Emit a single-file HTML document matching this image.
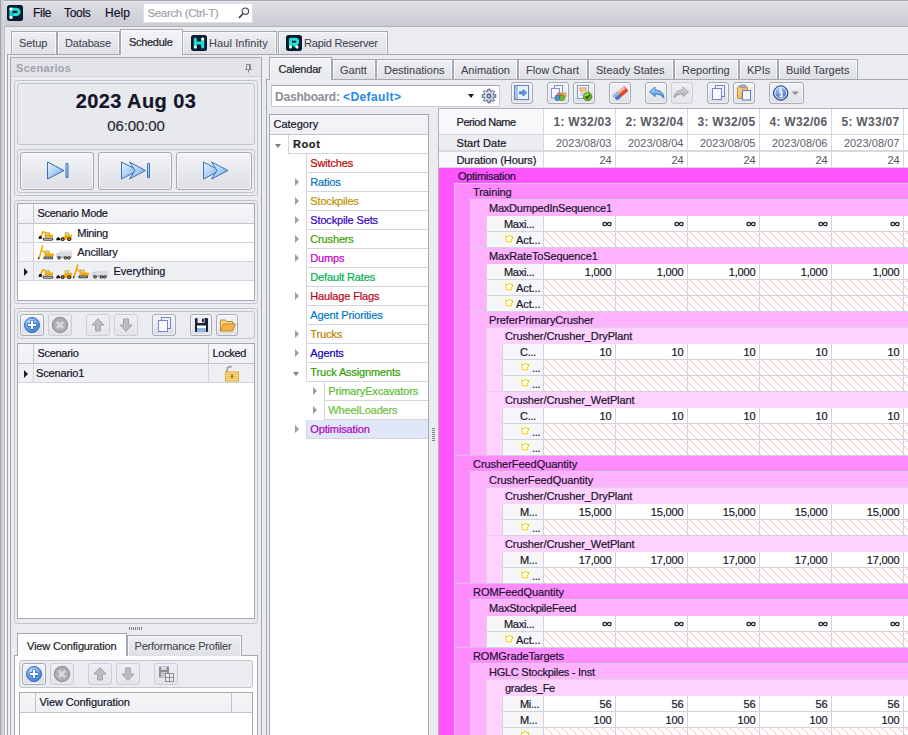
<!DOCTYPE html>
<html><head><meta charset="utf-8"><title>UI</title>
<style>
*{box-sizing:border-box;margin:0;padding:0}
html,body{width:908px;height:735px;overflow:hidden;background:#e9eaee}
body{font-family:"Liberation Sans",sans-serif;font-size:11px;color:#14142a;-webkit-text-stroke:.2px currentColor;position:relative;letter-spacing:-0.3px}
.a{position:absolute}
.t{position:absolute;white-space:nowrap;line-height:13px;height:13px}
.tab{-webkit-text-stroke:.08px currentColor;letter-spacing:0;box-shadow:inset 1px 1px 0 rgba(255,255,255,.65),inset -1px 0 0 rgba(255,255,255,.65);position:absolute;border:1px solid #a5a7b1;border-bottom:none;background:linear-gradient(#eeeff2,#dfe0e5);color:#44444f;white-space:nowrap}
.tab.act{-webkit-text-stroke:.2px currentColor;background:linear-gradient(#f3f3f6,#ebecf0 70%);color:#1e1e28;z-index:3}
.grp{position:absolute;border:1px solid #c3c5ce;border-radius:3px}
.btn{position:absolute;border:1px solid #a7a9b3;border-radius:3px;background:linear-gradient(#f3f4f6,#dedfe5);box-shadow:inset 0 0 0 1px rgba(255,255,255,.55)}
.btn.dis{border-color:#cdced6;background:linear-gradient(#eeeff2,#e4e5ea);box-shadow:none}
.btn svg{position:absolute;left:0;top:0}
.grid{position:absolute;background:#fff;border:1px solid #a5a7b1;overflow:hidden}
.gh{position:absolute;background:linear-gradient(#f6f6f8,#eff0f3);border-bottom:1px solid #c3c5ce;border-right:1px solid #c3c5ce}
.gr{position:absolute;border-bottom:1px solid #d3d4dc;border-right:1px solid #d3d4dc}
.tr{position:absolute;height:19px;border-bottom:1px solid #d3d4dc;border-left:1px solid #d3d4dc;background:#fff}
.tr .t{left:3.300px;top:3px;letter-spacing:-.15px}
.ar{position:absolute;width:0;height:0;border-left:4px solid #9a9ca6;border-top:4px solid transparent;border-bottom:4px solid transparent}
.ad{position:absolute;width:0;height:0;border-top:4px solid #7c7e88;border-left:3.600px solid transparent;border-right:3.600px solid transparent}
.c{position:absolute;height:16px;border-right:1px solid #d2d3db;border-bottom:1px solid #d2d3db;line-height:16px;text-align:right;padding-right:3.500px;letter-spacing:-.15px;background:#fff;white-space:nowrap;overflow:hidden}
.hc{background:transparent}
</style></head><body>
<div class="a" style="left:0px;top:0px;width:908px;height:27px;background:linear-gradient(#dfe0e5,#c9cad2);border-top:1px solid #a2a4ae;box-shadow:inset 0 1px 0 #ececf0"></div>
<div class="a" style="left:0px;top:0px;width:1px;height:735px;background:#a2a4ae"></div>
<div class="a" style="left:1px;top:0px;width:3px;height:735px;background:linear-gradient(90deg,#c3c5cd,#dcdde2)"></div>
<div class="a" style="left:4px;top:26px;width:904px;height:709px;background:#ebecf0;border-left:1px solid #b6b8c1;border-top:1px solid #b0b2bc"></div>
<div class="a" style="left:5px;top:27px;width:1px;height:708px;background:#f6f6f8"></div>
<div class="a" style="left:7px;top:54px;width:1px;height:681px;background:#a5a7b1"></div>
<div class="a" style="left:8px;top:55px;width:2px;height:680px;background:#f0f0f3"></div>
<svg class="a" style="left:7px;top:5px" width="16" height="16" viewBox="0 0 16 16"><rect width="16" height="16" rx="2.5" fill="#0a1a30"/><path d="M4 4 V12.3" stroke="#19d3d9" stroke-width="3.2" stroke-linecap="round" fill="none"/><path d="M4 4.200 H9.400 A2.700 2.700 0 0 1 9.400 9.600 H7" stroke="#22e0c8" stroke-width="3" stroke-linecap="round" stroke-linejoin="round" fill="none"/><circle cx="4" cy="4" r="1.6" fill="#fff"/><circle cx="4" cy="12.3" r="1.6" fill="#fff"/></svg>
<div class="t" style="left:33px;top:6px;font-size:12px;line-height:15px;height:15px">File</div>
<div class="t" style="left:64px;top:6px;font-size:12px;line-height:15px;height:15px">Tools</div>
<div class="t" style="left:105px;top:6px;font-size:12px;line-height:15px;height:15px;letter-spacing:.05px">Help</div>
<div class="a" style="left:143px;top:3px;width:110px;height:20px;background:#fff;border:1px solid #dfe0e6"></div>
<div class="t" style="left:147.5px;top:6px;font-size:11.500px;line-height:15px;height:15px;color:#a0a2ac;letter-spacing:-.35px">Search (Ctrl-T)</div>
<svg class="a" style="left:237px;top:6px" width="14" height="14" viewBox="0 0 14 14"><circle cx="8.3" cy="5.2" r="3.2" fill="none" stroke="#3a3a44" stroke-width="1.100"/><path d="M6 7.7 L2.5 11.4" stroke="#3a3a44" stroke-width="1.600" stroke-linecap="round"/></svg>
<div class="a" style="left:7px;top:54px;width:901px;height:1px;background:#a5a7b1"></div>
<div class="tab" style="left:11px;top:31px;width:46px;height:23px;"><div class="t" style="left:7px;top:5px;letter-spacing:-0.1px">Setup</div></div>
<div class="tab" style="left:57px;top:31px;width:63px;height:23px;"><div class="t" style="left:7px;top:5px;letter-spacing:-0.15px">Database</div></div>
<div class="tab act" style="left:120px;top:29px;width:63px;height:26px;"><div class="t" style="left:8px;top:6px;letter-spacing:-0.3px">Schedule</div></div>
<div class="tab" style="left:182px;top:31px;width:95px;height:23px;"><svg class="a" style="left:8px;top:3px" width="16" height="16" viewBox="0 0 16 16"><rect width="16" height="16" rx="2.5" fill="#0a1a30"/><path d="M4.3 4 V12 M11.7 4 V12 M4.3 8 H11.7" stroke="#22dfd0" stroke-width="3.100" stroke-linecap="round" fill="none"/><circle cx="4.3" cy="12" r="1.500" fill="#fff"/><circle cx="11.7" cy="4" r="1.500" fill="#fff"/></svg><div class="t" style="left:26px;top:5px;letter-spacing:0.1px">Haul Infinity</div></div>
<div class="tab" style="left:278px;top:31px;width:110px;height:23px;"><svg class="a" style="left:7px;top:3px" width="16" height="16" viewBox="0 0 16 16"><rect width="16" height="16" rx="2.5" fill="#0a1a30"/><path d="M4.5 12 V4.200 H9.300 A2.400 2.400 0 0 1 9.300 9 H7 L11 12" stroke="#22dfd0" stroke-width="3" stroke-linecap="round" stroke-linejoin="round" fill="none"/><circle cx="4.5" cy="12" r="1.4" fill="#fff"/><circle cx="11" cy="12" r="1.4" fill="#fff"/></svg><div class="t" style="left:25px;top:5px;letter-spacing:-0.2px">Rapid Reserver</div></div>
<div class="a" style="left:10px;top:57px;width:252px;height:678px;border:1px solid #a5a7b1;border-bottom:none;background:#ebecf0"></div>
<div class="a" style="left:11px;top:58px;width:250px;height:19px;background:#e3e4e9;border-bottom:1px solid #d0d1d9"></div>
<div class="t" style="left:16px;top:62px;font-weight:bold;color:#a0a2ac;font-size:11px;letter-spacing:.3px;-webkit-text-stroke:0">Scenarios</div>
<svg class="a" style="left:244px;top:63px" width="9" height="10" viewBox="0 0 9 10"><path d="M2.500 6 V1.500 H6.500 V6 M5.500 1.500 V6" fill="none" stroke="#868892" stroke-width="1"/><path d="M1 6.500 H8 M4.500 7 V9.500" stroke="#868892" stroke-width="1"/></svg>
<div class="grp" style="left:14px;top:80px;width:244px;height:116px;"></div>
<div class="grp" style="left:17px;top:83px;width:238px;height:62px;background:#e8e9ed;border-color:#c3c5ce"></div>
<div class="t" style="left:17px;top:89px;width:238px;text-align:center;font-weight:bold;font-size:20px;line-height:24px;height:24px;letter-spacing:.4px">2023 Aug 03</div>
<div class="t" style="left:17px;top:117px;width:238px;text-align:center;font-size:15px;line-height:18px;height:18px;letter-spacing:-.1px;color:#2a2a34">06:00:00</div>
<div class="grp" style="left:17px;top:149px;width:238px;height:44px;"></div>
<div class="btn" style="left:20px;top:152px;width:74px;height:38px;"><svg width="74" height="37" viewBox="0 0 74 37"><defs><linearGradient id="pga" x1="0" y1="0" x2="1" y2="1"><stop offset="0" stop-color="#eaf4fd"/><stop offset=".55" stop-color="#a9cdf2"/><stop offset="1" stop-color="#5a98e2"/></linearGradient></defs><path d="M26.5 9 L43 17.5 L26.5 26 Z" fill="url(#pga)" stroke="#3a70c0" stroke-width="1" stroke-linejoin="round"/><rect x="45" y="10.500" width="2" height="14" fill="url(#pga)" stroke="#3a70c0" stroke-width="1" stroke-linejoin="round"/></svg></div>
<div class="btn" style="left:98px;top:152px;width:74px;height:38px;"><svg width="74" height="37" viewBox="0 0 74 37"><defs><linearGradient id="pgb" x1="0" y1="0" x2="1" y2="1"><stop offset="0" stop-color="#eaf4fd"/><stop offset=".55" stop-color="#a9cdf2"/><stop offset="1" stop-color="#5a98e2"/></linearGradient></defs><path d="M22.500 9 L39 17.5 L22.5 26 Z" fill="url(#pgb)" stroke="#3a70c0" stroke-width="1" stroke-linejoin="round"/><path d="M30.5 9 L46.5 17.5 L30.5 26 L36 17.5 Z" fill="url(#pgb)" stroke="#3a70c0" stroke-width="1" stroke-linejoin="round"/><rect x="48.500" y="10.500" width="2" height="14" fill="url(#pgb)" stroke="#3a70c0" stroke-width="1" stroke-linejoin="round"/></svg></div>
<div class="btn" style="left:176px;top:152px;width:76px;height:38px;"><svg width="74" height="37" viewBox="0 0 74 37"><defs><linearGradient id="pgc" x1="0" y1="0" x2="1" y2="1"><stop offset="0" stop-color="#eaf4fd"/><stop offset=".55" stop-color="#a9cdf2"/><stop offset="1" stop-color="#5a98e2"/></linearGradient></defs><path d="M26.500 9 L43 17.5 L26.5 26 Z" fill="url(#pgc)" stroke="#3a70c0" stroke-width="1" stroke-linejoin="round"/><path d="M34.5 9 L51 17.5 L34.5 26 L40 17.5 Z" fill="url(#pgc)" stroke="#3a70c0" stroke-width="1" stroke-linejoin="round"/></svg></div>
<div class="grp" style="left:14px;top:200px;width:244px;height:104px;"></div>
<div class="grid" style="left:17px;top:203px;width:238px;height:98px;"></div>
<div class="gh" style="left:18px;top:204px;width:16px;height:20px;"></div>
<div class="gh" style="left:34px;top:204px;width:220px;height:20px;border-right:none"></div>
<div class="t" style="left:37.5px;top:207px;">Scenario Mode</div>
<div class="gr" style="left:18px;top:224px;width:16px;height:19px;background:#f3f3f6"></div>
<div class="gr" style="left:34px;top:224px;width:220px;height:19px;background:#fff;border-right:none"></div>
<div class="t" style="left:77.3px;top:227px;letter-spacing:-0.3px">Mining</div>
<div class="gr" style="left:18px;top:243px;width:16px;height:19px;background:#f3f3f6"></div>
<div class="gr" style="left:34px;top:243px;width:220px;height:19px;background:#fff;border-right:none"></div>
<div class="t" style="left:77.3px;top:246px;letter-spacing:-0.15px">Ancillary</div>
<div class="gr" style="left:18px;top:262px;width:16px;height:19px;background:#eeeff3"></div>
<div class="gr" style="left:34px;top:262px;width:220px;height:19px;background:#eeeff3;border-right:none"></div>
<div class="t" style="left:113.5px;top:265px;letter-spacing:0px">Everything</div>
<div class="a" style="left:24px;top:268px;width:0;height:0;border-left:4px solid #1e1e28;border-top:4px solid transparent;border-bottom:4px solid transparent"></div>
<svg class="a" style="left:38px;top:229px" width="18" height="16" viewBox="0 0 18 16"><g><path d="M2.600 7.500 L5 2.800 L8.600 4.200" fill="none" stroke="#f5a400" stroke-width="1.500" stroke-linejoin="round"/><path d="M.7 8.600 Q1 6.400 3.200 7 L4.500 9 Q3 10.400 .7 10 Z" fill="#111"/><path d="M7 3.200 H12 V5.400 H15 V8.600 H6.600 Z" fill="#f8a800"/><rect x="8.300" y="3.700" width="2.300" height="2" fill="#8fe4e0"/><rect x="4.800" y="8.800" width="10.400" height="2.900" rx="1.450" fill="#4a4a4a"/><rect x="6" y="9.700" width="8" height="1.100" fill="#c8c8c8"/></g></svg>
<svg class="a" style="left:56px;top:230px" width="18" height="16" viewBox="0 0 18 16"><g><path d="M0 10.300 Q.2 7.500 2.600 7 L4.200 9 L4 10.300 Z" fill="#111"/><path d="M4 8.600 L8.600 6 L8.800 2.200 L13 2.200 L13.600 5.600 L15.800 4.500 L15.900 9.600 L4 9.800 Z" fill="#f8a800"/><rect x="9.500" y="2.900" width="2.600" height="2.400" fill="#8fe4e0"/><circle cx="6.600" cy="9.200" r="1.900" fill="#222"/><circle cx="13.200" cy="9.200" r="1.900" fill="#222"/><circle cx="6.600" cy="9.200" r=".8" fill="#c8c8c8"/><circle cx="13.200" cy="9.200" r=".8" fill="#c8c8c8"/></g></svg>
<svg class="a" style="left:37px;top:245px" width="18" height="16" viewBox="0 0 18 16"><g><path d="M5.800 0.200 L1.900 14" stroke="#f5a400" stroke-width="1.500"/><path d="M1.700 12 L1.500 14.400" stroke="#444" stroke-width="1.200"/><path d="M4.600 5 L8.500 8" stroke="#f5a400" stroke-width="1.300"/><path d="M7.800 5.600 H12.500 L13 8.400 H16.800 V11.600 H7.400 Z" fill="#f8a800"/><rect x="9" y="6.300" width="2.600" height="2.200" fill="#8fe4e0"/><rect x="6.300" y="11.500" width="9.900" height="2.800" rx="1.400" fill="#3a3a3a"/><rect x="7.500" y="12.400" width="7.500" height="1" fill="#b0b0b0"/></g></svg>
<svg class="a" style="left:56px;top:248px" width="18" height="16" viewBox="0 0 18 16"><g><path d="M3.600 1.300 L15.900 1.100 L15.900 8.600 L3.600 8.600 Z" fill="#dcdce0"/><path d="M3.600 1.300 L15.900 1.100 L15.900 3 L3.600 3.400 Z" fill="#f6f6f8"/><path d="M0.300 5.200 L3.600 4.200 L3.600 9 L0.300 9 Z" fill="#c4d4d8"/><rect x=".5" y="8.600" width="15.400" height="1" fill="#888"/><circle cx="3.100" cy="9.900" r="1.700" fill="#222"/><circle cx="9.300" cy="9.900" r="1.700" fill="#222"/><circle cx="12.800" cy="9.900" r="1.700" fill="#222"/><circle cx="3.100" cy="9.900" r=".7" fill="#ddd"/><circle cx="9.300" cy="9.900" r=".7" fill="#ddd"/><circle cx="12.800" cy="9.900" r=".7" fill="#ddd"/></g></svg>
<svg class="a" style="left:38px;top:267px" width="18" height="16" viewBox="0 0 18 16"><g><path d="M2.600 7.500 L5 2.800 L8.600 4.200" fill="none" stroke="#f5a400" stroke-width="1.500" stroke-linejoin="round"/><path d="M.7 8.600 Q1 6.400 3.200 7 L4.500 9 Q3 10.400 .7 10 Z" fill="#111"/><path d="M7 3.200 H12 V5.400 H15 V8.600 H6.600 Z" fill="#f8a800"/><rect x="8.300" y="3.700" width="2.300" height="2" fill="#8fe4e0"/><rect x="4.800" y="8.800" width="10.400" height="2.900" rx="1.450" fill="#4a4a4a"/><rect x="6" y="9.700" width="8" height="1.100" fill="#c8c8c8"/></g></svg>
<svg class="a" style="left:56px;top:268px" width="18" height="16" viewBox="0 0 18 16"><g><path d="M0 10.300 Q.2 7.500 2.600 7 L4.200 9 L4 10.300 Z" fill="#111"/><path d="M4 8.600 L8.600 6 L8.800 2.200 L13 2.200 L13.600 5.600 L15.800 4.500 L15.900 9.600 L4 9.800 Z" fill="#f8a800"/><rect x="9.500" y="2.900" width="2.600" height="2.400" fill="#8fe4e0"/><circle cx="6.600" cy="9.200" r="1.900" fill="#222"/><circle cx="13.200" cy="9.200" r="1.900" fill="#222"/><circle cx="6.600" cy="9.200" r=".8" fill="#c8c8c8"/><circle cx="13.200" cy="9.200" r=".8" fill="#c8c8c8"/></g></svg>
<svg class="a" style="left:72px;top:264px" width="18" height="16" viewBox="0 0 18 16"><g><path d="M5.800 0.200 L1.900 14" stroke="#f5a400" stroke-width="1.500"/><path d="M1.700 12 L1.500 14.400" stroke="#444" stroke-width="1.200"/><path d="M4.600 5 L8.500 8" stroke="#f5a400" stroke-width="1.300"/><path d="M7.800 5.600 H12.500 L13 8.400 H16.800 V11.600 H7.400 Z" fill="#f8a800"/><rect x="9" y="6.300" width="2.600" height="2.200" fill="#8fe4e0"/><rect x="6.300" y="11.500" width="9.900" height="2.800" rx="1.400" fill="#3a3a3a"/><rect x="7.500" y="12.400" width="7.500" height="1" fill="#b0b0b0"/></g></svg>
<svg class="a" style="left:92px;top:267px" width="18" height="16" viewBox="0 0 18 16"><g><path d="M3.600 1.300 L15.900 1.100 L15.900 8.600 L3.600 8.600 Z" fill="#dcdce0"/><path d="M3.600 1.300 L15.900 1.100 L15.900 3 L3.600 3.400 Z" fill="#f6f6f8"/><path d="M0.300 5.200 L3.600 4.200 L3.600 9 L0.300 9 Z" fill="#c4d4d8"/><rect x=".5" y="8.600" width="15.400" height="1" fill="#888"/><circle cx="3.100" cy="9.900" r="1.700" fill="#222"/><circle cx="9.300" cy="9.900" r="1.700" fill="#222"/><circle cx="12.800" cy="9.900" r="1.700" fill="#222"/><circle cx="3.100" cy="9.900" r=".7" fill="#ddd"/><circle cx="9.300" cy="9.900" r=".7" fill="#ddd"/><circle cx="12.800" cy="9.900" r=".7" fill="#ddd"/></g></svg>
<div class="grp" style="left:14px;top:308px;width:244px;height:316px;"></div>
<div class="grp" style="left:17px;top:311px;width:238px;height:28px;"></div>
<div class="btn" style="left:20px;top:314px;width:24px;height:22px;"><svg width="22" height="20" viewBox="0 0 22 20"><defs><radialGradient id="bp" cx=".4" cy=".3" r=".8"><stop offset="0" stop-color="#c4e2fc"/><stop offset=".6" stop-color="#5a9ae8"/><stop offset="1" stop-color="#3274d4"/></radialGradient></defs><circle cx="11" cy="10" r="7.500" fill="url(#bp)" stroke="#3a6cc0" stroke-width="1"/><path d="M11 5.500 V14.500 M6.500 10 H15.500" stroke="#2f62b8" stroke-width="3.600"/><path d="M11 6 V14 M7 10 H15" stroke="#fff" stroke-width="2.200"/></svg></div>
<div class="btn dis" style="left:48px;top:314px;width:24px;height:22px;"><svg width="22" height="20" viewBox="0 0 22 20"><circle cx="11" cy="10" r="7.500" fill="#b0b0b2" stroke="#98989c" stroke-width="1.400"/><path d="M7.800 6.800 L14.200 13.200 M14.200 6.800 L7.800 13.200" stroke="#dadadc" stroke-width="2.600"/></svg></div>
<div class="btn dis" style="left:86px;top:314px;width:24px;height:22px;"><svg width="22" height="20" viewBox="0 0 22 20"><path d="M11 3.500 L17 10 H13.500 V16 H8.500 V10 H5 Z" fill="#bcbcbe" stroke="#a2a2a6" stroke-width="1" stroke-linejoin="round"/></svg></div>
<div class="btn dis" style="left:114px;top:314px;width:24px;height:22px;"><svg width="22" height="20" viewBox="0 0 22 20"><path d="M11 16.500 L17 10 H13.500 V4 H8.500 V10 H5 Z" fill="#bcbcbe" stroke="#a2a2a6" stroke-width="1" stroke-linejoin="round"/></svg></div>
<div class="btn" style="left:152px;top:314px;width:24px;height:22px;"><svg width="22" height="20" viewBox="0 0 22 20"><rect x="8.500" y="2.500" width="9" height="11" fill="#eef1fa" stroke="#7486c6"/><rect x="5.500" y="5.500" width="9" height="11" fill="#f6f8fd" stroke="#7486c6"/></svg></div>
<div class="btn" style="left:190px;top:314px;width:22px;height:22px;"><svg width="21" height="20" viewBox="0 0 21 20"><rect x="4" y="3" width="13" height="14" rx="1" fill="#1a2238"/><rect x="6.500" y="3" width="7" height="5" fill="#e8ecf4"/><rect x="11" y="3.800" width="1.800" height="3.400" fill="#1a2238"/><rect x="6" y="10.500" width="9" height="6.500" fill="#fff"/><rect x="6" y="13" width="9" height="4" fill="#8ab6e8"/></svg></div>
<div class="btn" style="left:216px;top:314px;width:22px;height:22px;"><svg width="21" height="20" viewBox="0 0 21 20"><path d="M3.500 16 V5 H8 L9.500 6.500 H15.500 V9" fill="#f6d48a" stroke="#c08a28" stroke-linejoin="round"/><path d="M3.500 16 L6.500 9 H18.500 L15.500 16 Z" fill="#f2b449" stroke="#c08a28" stroke-linejoin="round"/></svg></div>
<div class="grid" style="left:17px;top:343px;width:238px;height:276px;"></div>
<div class="gh" style="left:18px;top:344px;width:16px;height:20px;"></div>
<div class="gh" style="left:34px;top:344px;width:175px;height:20px;"></div>
<div class="gh" style="left:209px;top:344px;width:45px;height:20px;border-right:none"></div>
<div class="t" style="left:37.5px;top:347px;">Scenario</div>
<div class="t" style="left:212.5px;top:347px;">Locked</div>
<div class="gr" style="left:18px;top:364px;width:16px;height:19px;background:#eeeff3"></div>
<div class="gr" style="left:34px;top:364px;width:175px;height:19px;background:#eeeff3"></div>
<div class="gr" style="left:209px;top:364px;width:45px;height:19px;background:#eeeff3;border-right:none"></div>
<div class="a" style="left:24px;top:370px;width:0;height:0;border-left:4px solid #1e1e28;border-top:4px solid transparent;border-bottom:4px solid transparent"></div>
<div class="t" style="left:36px;top:367px;letter-spacing:-.15px">Scenario1</div>
<svg class="a" style="left:224px;top:365px" width="16" height="17" viewBox="0 0 16 17"><path d="M3.200 7.500 V4.500 A2.600 2.600 0 0 1 7.600 2.400" fill="none" stroke="#a4a4aa" stroke-width="2"/><rect x="1.500" y="7" width="13" height="9" fill="#f8dc8c" stroke="#e0a428"/><path d="M3 9.500 H13 M3 11.500 H13 M3 13.500 H13" stroke="#eab840" stroke-width="1"/><rect x="7" y="9.500" width="2" height="3.500" fill="#b07820"/></svg>
<div class="a" style="left:129px;top:627px;width:1px;height:3px;background:#80828e"></div>
<div class="a" style="left:131px;top:627px;width:1px;height:3px;background:#80828e"></div>
<div class="a" style="left:133px;top:627px;width:1px;height:3px;background:#80828e"></div>
<div class="a" style="left:135px;top:627px;width:1px;height:3px;background:#80828e"></div>
<div class="a" style="left:137px;top:627px;width:1px;height:3px;background:#80828e"></div>
<div class="a" style="left:139px;top:627px;width:1px;height:3px;background:#80828e"></div>
<div class="a" style="left:141px;top:627px;width:1px;height:3px;background:#80828e"></div>
<div class="a" style="left:14px;top:655px;width:244px;height:80px;border:1px solid #a5a7b1;border-bottom:none;background:#fdfdfe"></div>
<div class="tab act" style="left:17px;top:633px;width:110px;height:23px;background:#fdfdfe"><div class="t" style="left:9px;top:6px;letter-spacing:-0.15px">View Configuration</div></div>
<div class="tab" style="left:127px;top:635px;width:115px;height:21px;"><div class="t" style="left:6.5px;top:4px;letter-spacing:-0.2px">Performance Profiler</div></div>
<div class="grp" style="left:19px;top:660px;width:234px;height:28px;background:#ebecf0"></div>
<div class="btn" style="left:22px;top:663px;width:24px;height:22px;"><svg width="22" height="20" viewBox="0 0 22 20"><defs><radialGradient id="bp" cx=".4" cy=".3" r=".8"><stop offset="0" stop-color="#c4e2fc"/><stop offset=".6" stop-color="#5a9ae8"/><stop offset="1" stop-color="#3274d4"/></radialGradient></defs><circle cx="11" cy="10" r="7.500" fill="url(#bp)" stroke="#3a6cc0" stroke-width="1"/><path d="M11 5.500 V14.500 M6.500 10 H15.500" stroke="#2f62b8" stroke-width="3.600"/><path d="M11 6 V14 M7 10 H15" stroke="#fff" stroke-width="2.200"/></svg></div>
<div class="btn dis" style="left:50px;top:663px;width:24px;height:22px;"><svg width="22" height="20" viewBox="0 0 22 20"><circle cx="11" cy="10" r="7.500" fill="#b0b0b2" stroke="#98989c" stroke-width="1.400"/><path d="M7.800 6.800 L14.200 13.200 M14.200 6.800 L7.800 13.200" stroke="#dadadc" stroke-width="2.600"/></svg></div>
<div class="btn dis" style="left:88px;top:663px;width:24px;height:22px;"><svg width="22" height="20" viewBox="0 0 22 20"><path d="M11 3.500 L17 10 H13.500 V16 H8.500 V10 H5 Z" fill="#bcbcbe" stroke="#a2a2a6" stroke-width="1" stroke-linejoin="round"/></svg></div>
<div class="btn dis" style="left:116px;top:663px;width:24px;height:22px;"><svg width="22" height="20" viewBox="0 0 22 20"><path d="M11 16.500 L17 10 H13.500 V4 H8.500 V10 H5 Z" fill="#bcbcbe" stroke="#a2a2a6" stroke-width="1" stroke-linejoin="round"/></svg></div>
<div class="btn dis" style="left:154px;top:663px;width:24px;height:22px;"><svg width="22" height="20" viewBox="0 0 22 20"><rect x="4" y="2.500" width="10" height="11" fill="#8e8e94"/><rect x="6" y="2.500" width="5.500" height="3.500" fill="#d8d8dc"/><rect x="6" y="8" width="6" height="5.500" fill="#c4c4c8"/><rect x="10.500" y="9.500" width="8" height="8" fill="#ececef" stroke="#8e8e94"/><path d="M10.500 13.500 H18.500 M14.500 9.500 V17.500" stroke="#8e8e94"/></svg></div>
<div class="grid" style="left:19px;top:692px;width:234px;height:50px;"></div>
<div class="gh" style="left:20px;top:693px;width:16px;height:20px;"></div>
<div class="gh" style="left:36px;top:693px;width:196px;height:20px;"></div>
<div class="gh" style="left:232px;top:693px;width:20px;height:20px;border-right:none"></div>
<div class="t" style="left:39.5px;top:696px;letter-spacing:-.1px">View Configuration</div>
<div class="a" style="left:266px;top:79px;width:650px;height:660px;border:1px solid #a5a7b1;background:#ebecf0"></div>
<div class="tab act" style="left:269px;top:57px;width:63px;height:23px;"><div class="t" style="left:8.5px;top:5px;letter-spacing:-0.2px">Calendar</div></div>
<div class="tab" style="left:332px;top:59px;width:44px;height:20px;"><div class="t" style="left:7px;top:4px;letter-spacing:0px">Gantt</div></div>
<div class="tab" style="left:376px;top:59px;width:77px;height:20px;"><div class="t" style="left:7px;top:4px;letter-spacing:0px">Destinations</div></div>
<div class="tab" style="left:453px;top:59px;width:65px;height:20px;"><div class="t" style="left:7px;top:4px;letter-spacing:0px">Animation</div></div>
<div class="tab" style="left:518px;top:59px;width:70px;height:20px;"><div class="t" style="left:7px;top:4px;letter-spacing:0px">Flow Chart</div></div>
<div class="tab" style="left:588px;top:59px;width:86px;height:20px;"><div class="t" style="left:7px;top:4px;letter-spacing:0px">Steady States</div></div>
<div class="tab" style="left:674px;top:59px;width:65px;height:20px;"><div class="t" style="left:7px;top:4px;letter-spacing:0px">Reporting</div></div>
<div class="tab" style="left:739px;top:59px;width:39px;height:20px;"><div class="t" style="left:7px;top:4px;letter-spacing:0px">KPIs</div></div>
<div class="tab" style="left:778px;top:59px;width:80px;height:20px;"><div class="t" style="left:7px;top:4px;letter-spacing:0px">Build Targets</div></div>
<div class="a" style="left:271px;top:85px;width:229px;height:22px;background:#fff;border:1px solid #c8cad3;border-top-color:#a2a4b0"></div>
<div class="t" style="left:275px;top:90px;font-weight:bold;color:#8c8e98;font-size:12px;letter-spacing:-.2px;line-height:14px;height:14px;-webkit-text-stroke:0">Dashboard:</div>
<div class="t" style="left:343px;top:90px;font-weight:bold;color:#1e8ae6;font-size:12px;letter-spacing:.4px;line-height:14px;height:14px;-webkit-text-stroke:0">&lt;Default&gt;</div>
<div class="a" style="left:468px;top:94px;width:0;height:0;border-top:4px solid #1c1c30;border-left:3.500px solid transparent;border-right:3.500px solid transparent"></div>
<svg class="a" style="left:481px;top:88px" width="16" height="16" viewBox="0 0 16 16"><defs><linearGradient id="gg" x1="0" y1="0" x2="1" y2="1"><stop offset="0" stop-color="#f4f7fc"/><stop offset="1" stop-color="#b4bfd6"/></linearGradient></defs><path d="M6.81 1.20 L9.19 1.20 L9.14 3.24 L10.56 3.82 L11.97 2.35 L13.65 4.03 L12.18 5.44 L12.76 6.86 L14.80 6.81 L14.80 9.19 L12.76 9.14 L12.18 10.56 L13.65 11.97 L11.97 13.65 L10.56 12.18 L9.14 12.76 L9.19 14.80 L6.81 14.80 L6.86 12.76 L5.44 12.18 L4.03 13.65 L2.35 11.97 L3.82 10.56 L3.24 9.14 L1.20 9.19 L1.20 6.81 L3.24 6.86 L3.82 5.44 L2.35 4.03 L4.03 2.35 L5.44 3.82 L6.86 3.24 Z" fill="url(#gg)" stroke="#46557e" stroke-width="1" stroke-linejoin="round"/><circle cx="8" cy="8" r="1.900" fill="#c4c6cc" stroke="#46557e" stroke-width="1.100"/></svg>
<div class="btn" style="left:511px;top:82px;width:22px;height:22px;"><svg width="20" height="20" viewBox="0 0 20 20"><rect x="2.500" y="2.500" width="14" height="14" fill="#e9f0fb" stroke="#6286cc"/><rect x="3" y="3" width="3" height="13" fill="#a4c4ee"/><path d="M7.500 8.700 H11 V6.600 L14.800 9.800 L11 13 V10.900 H7.500 Z" fill="#5a9ae6" stroke="#2f66b8" stroke-width=".7" stroke-linejoin="round"/></svg></div>
<div class="btn" style="left:547px;top:82px;width:22px;height:22px;"><svg width="20" height="20" viewBox="0 0 20 20"><rect x="6.500" y="2.500" width="8" height="9.500" fill="#f4f6fc" stroke="#8094cc"/><rect x="3.500" y="5.500" width="8" height="9.500" fill="#f8f9fd" stroke="#8094cc"/><rect x="9.500" y="10" width="4.300" height="4.500" rx=".8" fill="#f0786a" stroke="#c84838" stroke-width=".7"/><rect x="13.600" y="10" width="4.300" height="4.500" rx=".8" fill="#f2b450" stroke="#c8841c" stroke-width=".7"/><rect x="7.300" y="12.300" width="4.400" height="5" rx=".8" fill="#4c8ee0" stroke="#2a5eac" stroke-width=".7"/><rect x="11.700" y="12.300" width="4.400" height="5" rx=".8" fill="#74bc30" stroke="#417c14" stroke-width=".7"/></svg></div>
<div class="btn" style="left:573px;top:82px;width:22px;height:22px;"><svg width="20" height="20" viewBox="0 0 20 20"><defs><radialGradient id="gc" cx=".4" cy=".3" r=".8"><stop offset="0" stop-color="#a4d84c"/><stop offset="1" stop-color="#4c9414"/></radialGradient></defs><rect x="3.500" y="2.500" width="11" height="13" fill="#f6f8fd" stroke="#8094cc"/><rect x="6" y="5" width="6" height="2.800" fill="#fde4c4" stroke="#e48a28" stroke-width="1"/><path d="M6 10 H10.500 M6 12 H9" stroke="#a4b2d8"/><circle cx="13.600" cy="13.500" r="4.300" fill="url(#gc)" stroke="#3c7c10" stroke-width=".7"/><path d="M11.500 13.400 L13.100 15 L15.800 11.800" fill="none" stroke="#143c04" stroke-width="1.200"/></svg></div>
<div class="btn" style="left:609px;top:82px;width:22px;height:22px;"><svg width="20" height="20" viewBox="0 0 20 20"><g transform="rotate(-40 10.500 10)"><path d="M3 7 H17 Q18 7 18 8 V12.500 Q18 13.500 17 13.500 H5 Q3 13.500 3 11.500 Z" fill="#d84a34"/><path d="M3 7 H8.500 V13.500 H5 Q3 13.500 3 11.500 Z" fill="#3e7ed0"/><path d="M3 7 H17.500 V10 H3 Z" fill="#f8a48e"/><path d="M3 7 H8.500 V10 H3 Z" fill="#86bcf2"/><path d="M9.500 7.800 H16.500" stroke="#fcd0c4" stroke-width="1"/></g></svg></div>
<div class="btn" style="left:645px;top:82px;width:22px;height:22px;"><svg width="20" height="20" viewBox="0 0 20 20"><defs><linearGradient id="gu0" x1="0" y1="0" x2="0" y2="1"><stop offset="0" stop-color="#b8e0fa"/><stop offset="1" stop-color="#3c88e0"/></linearGradient></defs><path d="M3.500 8.800 L9 4 V7 C14.500 7 17.800 10 17.800 15.200 C15.800 12 13 11 9 11 V13.600 Z" fill="url(#gu0)" stroke="#2c68b8" stroke-width=".8" stroke-linejoin="round"/></svg></div>
<div class="btn dis" style="left:671px;top:82px;width:22px;height:22px;"><svg width="20" height="20" viewBox="0 0 20 20"><defs><linearGradient id="gu1" x1="0" y1="0" x2="0" y2="1"><stop offset="0" stop-color="#dcdcdc"/><stop offset="1" stop-color="#a4a4a6"/></linearGradient></defs><path transform="translate(20 0) scale(-1 1)" d="M3.500 8.800 L9 4 V7 C14.500 7 17.800 10 17.800 15.200 C15.800 12 13 11 9 11 V13.600 Z" fill="url(#gu1)" stroke="#9c9ca0" stroke-width=".8" stroke-linejoin="round"/></svg></div>
<div class="btn" style="left:707px;top:82px;width:22px;height:22px;"><svg width="20" height="20" viewBox="0 0 20 20"><rect x="7.500" y="2.500" width="9" height="11" fill="#eef1fa" stroke="#7486c6"/><rect x="4.500" y="5.500" width="9" height="11" fill="#f6f8fd" stroke="#7486c6"/></svg></div>
<div class="btn" style="left:733px;top:82px;width:22px;height:22px;"><svg width="20" height="20" viewBox="0 0 20 20"><defs><linearGradient id="gp" x1="0" y1="0" x2="1" y2="1"><stop offset="0" stop-color="#fbe0a4"/><stop offset="1" stop-color="#e2a040"/></linearGradient></defs><rect x="3.500" y="3.500" width="10" height="12" rx="1" fill="url(#gp)" stroke="#c88c30"/><rect x="6" y="2" width="5.500" height="2.800" rx=".8" fill="#b4bcd4" stroke="#6a7498" stroke-width=".7"/><rect x="8.500" y="7.500" width="8" height="9.500" fill="#f4f6fc" stroke="#6478bc"/></svg></div>
<div class="btn" style="left:769px;top:82px;width:35px;height:22px;"><svg width="34" height="20" viewBox="0 0 34 20"><defs><radialGradient id="bi" cx=".4" cy=".25" r=".85"><stop offset="0" stop-color="#a4c8f4"/><stop offset="1" stop-color="#2458b8"/></radialGradient></defs><circle cx="10.700" cy="10" r="7.200" fill="url(#bi)" stroke="#1c3f8c" stroke-width="1"/><circle cx="10.700" cy="10" r="5.800" fill="none" stroke="#eef4fc" stroke-width="1"/><circle cx="10.700" cy="6.600" r="1.250" fill="#fff"/><path d="M9.300 9 H11.600 V13.300 M9.200 13.500 H13" stroke="#fff" stroke-width="1.600" fill="none"/><path d="M21.500 8.500 H29 L25.250 12.300 Z" fill="#92949e"/></svg></div>
<div class="grid" style="left:269px;top:114px;width:160px;height:630px;"></div>
<div class="gh" style="left:270px;top:115px;width:158px;height:20px;border-right:none"></div>
<div class="t" style="left:273.5px;top:118px;letter-spacing:0">Category</div>
<div class="tr" style="left:288px;top:135px;width:140px;"><div class="t" style="color:#1e1e28;font-weight:bold;letter-spacing:.6px;left:4px;">Root</div></div>
<div class="ad" style="left:274.5px;top:143.5px"></div>
<div class="tr" style="left:306px;top:154px;width:122px;"><div class="t" style="color:#c00000;">Switches</div></div>
<div class="tr" style="left:306px;top:173px;width:122px;"><div class="t" style="color:#0070c0;">Ratios</div></div>
<div class="ar" style="left:295px;top:178px"></div>
<div class="tr" style="left:306px;top:192px;width:122px;"><div class="t" style="color:#c09000;">Stockpiles</div></div>
<div class="ar" style="left:295px;top:197px"></div>
<div class="tr" style="left:306px;top:211px;width:122px;"><div class="t" style="color:#3000c0;">Stockpile Sets</div></div>
<div class="ar" style="left:295px;top:216px"></div>
<div class="tr" style="left:306px;top:230px;width:122px;"><div class="t" style="color:#40a000;">Crushers</div></div>
<div class="ar" style="left:295px;top:235px"></div>
<div class="tr" style="left:306px;top:249px;width:122px;"><div class="t" style="color:#c000c0;">Dumps</div></div>
<div class="ar" style="left:295px;top:254px"></div>
<div class="tr" style="left:306px;top:268px;width:122px;"><div class="t" style="color:#00b050;">Default Rates</div></div>
<div class="tr" style="left:306px;top:287px;width:122px;"><div class="t" style="color:#c00020;">Haulage Flags</div></div>
<div class="ar" style="left:295px;top:292px"></div>
<div class="tr" style="left:306px;top:306px;width:122px;"><div class="t" style="color:#0078c8;">Agent Priorities</div></div>
<div class="tr" style="left:306px;top:325px;width:122px;"><div class="t" style="color:#c08000;">Trucks</div></div>
<div class="ar" style="left:295px;top:330px"></div>
<div class="tr" style="left:306px;top:344px;width:122px;"><div class="t" style="color:#1000c0;">Agents</div></div>
<div class="ar" style="left:295px;top:349px"></div>
<div class="tr" style="left:306px;top:363px;width:122px;"><div class="t" style="color:#30a000;">Truck Assignments</div></div>
<div class="ad" style="left:292.5px;top:371.5px"></div>
<div class="tr" style="left:324px;top:382px;width:104px;"><div class="t" style="color:#58c030;">PrimaryExcavators</div></div>
<div class="ar" style="left:313px;top:387px"></div>
<div class="tr" style="left:324px;top:401px;width:104px;"><div class="t" style="color:#70c040;">WheelLoaders</div></div>
<div class="ar" style="left:313px;top:406px"></div>
<div class="tr" style="left:306px;top:420px;width:122px;background:#dfe7f8;"><div class="t" style="color:#b000c0;">Optimisation</div></div>
<div class="ar" style="left:295px;top:425px"></div>
<div class="a" style="left:432px;top:428px;width:3px;height:1px;background:#80828e"></div>
<div class="a" style="left:432px;top:430px;width:3px;height:1px;background:#80828e"></div>
<div class="a" style="left:432px;top:432px;width:3px;height:1px;background:#80828e"></div>
<div class="a" style="left:432px;top:434px;width:3px;height:1px;background:#80828e"></div>
<div class="a" style="left:432px;top:436px;width:3px;height:1px;background:#80828e"></div>
<div class="a" style="left:432px;top:438px;width:3px;height:1px;background:#80828e"></div>
<div class="a" style="left:432px;top:440px;width:3px;height:1px;background:#80828e"></div>
<div class="a" style="left:438px;top:108px;width:470px;height:627px;background:#fff;border-left:1px solid #b0b2bb;border-top:1px solid #b0b2bb;overflow:hidden"></div>
<div class="c" style="left:439px;top:109px;width:105px;height:26px;background:#f8f8fa;text-align:left;border-color:#d8d9df;"></div>
<div class="t" style="left:456.5px;top:116px;letter-spacing:-.45px">Period Name</div>
<div class="c" style="left:544px;top:109px;width:72px;height:26px;background:#fff;line-height:26px;border-color:#d8d9df;font-weight:bold;color:#5a5a64;font-size:12px;letter-spacing:.3px;-webkit-text-stroke:0">1: W32/03</div>
<div class="c" style="left:616px;top:109px;width:72px;height:26px;background:#fff;line-height:26px;border-color:#d8d9df;font-weight:bold;color:#5a5a64;font-size:12px;letter-spacing:.3px;-webkit-text-stroke:0">2: W32/04</div>
<div class="c" style="left:688px;top:109px;width:72px;height:26px;background:#fff;line-height:26px;border-color:#d8d9df;font-weight:bold;color:#5a5a64;font-size:12px;letter-spacing:.3px;-webkit-text-stroke:0">3: W32/05</div>
<div class="c" style="left:760px;top:109px;width:72px;height:26px;background:#fff;line-height:26px;border-color:#d8d9df;font-weight:bold;color:#5a5a64;font-size:12px;letter-spacing:.3px;-webkit-text-stroke:0">4: W32/06</div>
<div class="c" style="left:832px;top:109px;width:72px;height:26px;background:#fff;line-height:26px;border-color:#d8d9df;font-weight:bold;color:#5a5a64;font-size:12px;letter-spacing:.3px;-webkit-text-stroke:0">5: W33/07</div>
<div class="c" style="left:904px;top:109px;width:10px;height:26px;background:#fff;line-height:26px;border-color:#d8d9df;font-weight:bold;color:#5a5a64;font-size:12px;letter-spacing:.3px;-webkit-text-stroke:0"></div>
<div class="c" style="left:439px;top:135px;width:105px;height:17px;background:#edeef1;text-align:left;border-color:#d8d9df;border-bottom-width:2px;"></div>
<div class="t" style="left:456.5px;top:137px;letter-spacing:.05px">Start Date</div>
<div class="c" style="left:544px;top:135px;width:72px;height:17px;background:#fff;line-height:16px;border-color:#d8d9df;border-bottom-width:2px;color:#62626c;letter-spacing:.05px;-webkit-text-stroke:.05px currentColor">2023/08/03</div>
<div class="c" style="left:616px;top:135px;width:72px;height:17px;background:#fff;line-height:16px;border-color:#d8d9df;border-bottom-width:2px;color:#62626c;letter-spacing:.05px;-webkit-text-stroke:.05px currentColor">2023/08/04</div>
<div class="c" style="left:688px;top:135px;width:72px;height:17px;background:#fff;line-height:16px;border-color:#d8d9df;border-bottom-width:2px;color:#62626c;letter-spacing:.05px;-webkit-text-stroke:.05px currentColor">2023/08/05</div>
<div class="c" style="left:760px;top:135px;width:72px;height:17px;background:#fff;line-height:16px;border-color:#d8d9df;border-bottom-width:2px;color:#62626c;letter-spacing:.05px;-webkit-text-stroke:.05px currentColor">2023/08/06</div>
<div class="c" style="left:832px;top:135px;width:72px;height:17px;background:#fff;line-height:16px;border-color:#d8d9df;border-bottom-width:2px;color:#62626c;letter-spacing:.05px;-webkit-text-stroke:.05px currentColor">2023/08/07</div>
<div class="c" style="left:904px;top:135px;width:10px;height:17px;background:#fff;line-height:16px;border-color:#d8d9df;border-bottom-width:2px;color:#62626c;letter-spacing:.05px;-webkit-text-stroke:.05px currentColor"></div>
<div class="c" style="left:439px;top:152px;width:105px;height:16px;background:#f8f8fa;text-align:left;border-color:#d8d9df;"></div>
<div class="t" style="left:456.5px;top:154px;letter-spacing:-.1px">Duration (Hours)</div>
<div class="c" style="left:544px;top:152px;width:72px;height:16px;background:#fff;line-height:17px;border-color:#d8d9df;color:#55555f;-webkit-text-stroke:.05px currentColor">24</div>
<div class="c" style="left:616px;top:152px;width:72px;height:16px;background:#fff;line-height:17px;border-color:#d8d9df;color:#55555f;-webkit-text-stroke:.05px currentColor">24</div>
<div class="c" style="left:688px;top:152px;width:72px;height:16px;background:#fff;line-height:17px;border-color:#d8d9df;color:#55555f;-webkit-text-stroke:.05px currentColor">24</div>
<div class="c" style="left:760px;top:152px;width:72px;height:16px;background:#fff;line-height:17px;border-color:#d8d9df;color:#55555f;-webkit-text-stroke:.05px currentColor">24</div>
<div class="c" style="left:832px;top:152px;width:72px;height:16px;background:#fff;line-height:17px;border-color:#d8d9df;color:#55555f;-webkit-text-stroke:.05px currentColor">24</div>
<div class="c" style="left:904px;top:152px;width:10px;height:16px;background:#fff;line-height:17px;border-color:#d8d9df;color:#55555f;-webkit-text-stroke:.05px currentColor"></div>
<svg class="a" style="left:0;top:0" width="908" height="735" viewBox="0 0 908 735" shape-rendering="crispEdges"><defs><pattern id="hp" x="2" y="0" width="8" height="8" patternUnits="userSpaceOnUse"><g fill="#ffbaba"><rect x="0" y="0" width="1" height="1"/><rect x="1" y="1" width="1" height="1"/><rect x="2" y="2" width="1" height="1"/><rect x="3" y="3" width="1" height="1"/><rect x="4" y="4" width="1" height="1"/><rect x="5" y="5" width="1" height="1"/><rect x="6" y="6" width="1" height="1"/><rect x="7" y="7" width="1" height="1"/></g></pattern></defs><rect x="544" y="232" width="364" height="15" fill="#fff"/><rect x="544" y="232" width="364" height="15" fill="url(#hp)"/><rect x="544" y="280" width="364" height="15" fill="#fff"/><rect x="544" y="280" width="364" height="15" fill="url(#hp)"/><rect x="544" y="296" width="364" height="15" fill="#fff"/><rect x="544" y="296" width="364" height="15" fill="url(#hp)"/><rect x="544" y="360" width="364" height="15" fill="#fff"/><rect x="544" y="360" width="364" height="15" fill="url(#hp)"/><rect x="544" y="376" width="364" height="15" fill="#fff"/><rect x="544" y="376" width="364" height="15" fill="url(#hp)"/><rect x="544" y="424" width="364" height="15" fill="#fff"/><rect x="544" y="424" width="364" height="15" fill="url(#hp)"/><rect x="544" y="440" width="364" height="15" fill="#fff"/><rect x="544" y="440" width="364" height="15" fill="url(#hp)"/><rect x="544" y="520" width="364" height="15" fill="#fff"/><rect x="544" y="520" width="364" height="15" fill="url(#hp)"/><rect x="544" y="568" width="364" height="15" fill="#fff"/><rect x="544" y="568" width="364" height="15" fill="url(#hp)"/><rect x="544" y="632" width="364" height="15" fill="#fff"/><rect x="544" y="632" width="364" height="15" fill="url(#hp)"/><rect x="544" y="728" width="364" height="15" fill="#fff"/><rect x="544" y="728" width="364" height="15" fill="url(#hp)"/></svg>
<svg width="0" height="0" style="position:absolute"><defs><g id="st" shape-rendering="crispEdges"><rect x="3" y="1" width="1" height="1" fill="#fffce8"/><rect x="4" y="1" width="1" height="1" fill="#fffce8"/><rect x="1" y="2" width="1" height="1" fill="#fffce8"/><rect x="2" y="2" width="1" height="1" fill="#fffce8"/><rect x="3" y="2" width="1" height="1" fill="#fffce8"/><rect x="4" y="2" width="1" height="1" fill="#fffce8"/><rect x="5" y="2" width="1" height="1" fill="#fffce8"/><rect x="6" y="2" width="1" height="1" fill="#fffce8"/><rect x="1" y="3" width="1" height="1" fill="#fffce8"/><rect x="2" y="3" width="1" height="1" fill="#fffce8"/><rect x="3" y="3" width="1" height="1" fill="#fffce8"/><rect x="4" y="3" width="1" height="1" fill="#fffce8"/><rect x="5" y="3" width="1" height="1" fill="#fffce8"/><rect x="6" y="3" width="1" height="1" fill="#fffce8"/><rect x="2" y="4" width="1" height="1" fill="#fffce8"/><rect x="3" y="4" width="1" height="1" fill="#fffce8"/><rect x="4" y="4" width="1" height="1" fill="#fffce8"/><rect x="5" y="4" width="1" height="1" fill="#fffce8"/><rect x="2" y="5" width="1" height="1" fill="#fffce8"/><rect x="3" y="5" width="1" height="1" fill="#fffce8"/><rect x="4" y="5" width="1" height="1" fill="#fffce8"/><rect x="5" y="5" width="1" height="1" fill="#fffce8"/><rect x="2" y="6" width="1" height="1" fill="#fffce8"/><rect x="5" y="6" width="1" height="1" fill="#fffce8"/><rect x="3" y="0" width="1" height="1" fill="#ecd400"/><rect x="4" y="0" width="1" height="1" fill="#ecd400"/><rect x="0" y="1" width="1" height="1" fill="#ecd400"/><rect x="1" y="1" width="1" height="1" fill="#ecd400"/><rect x="2" y="1" width="1" height="1" fill="#ecd400"/><rect x="5" y="1" width="1" height="1" fill="#ecd400"/><rect x="6" y="1" width="1" height="1" fill="#ecd400"/><rect x="7" y="1" width="1" height="1" fill="#ecd400"/><rect x="0" y="2" width="1" height="1" fill="#ecd400"/><rect x="7" y="2" width="1" height="1" fill="#ecd400"/><rect x="0" y="3" width="1" height="1" fill="#ecd400"/><rect x="7" y="3" width="1" height="1" fill="#ecd400"/><rect x="1" y="4" width="1" height="1" fill="#ecd400"/><rect x="6" y="4" width="1" height="1" fill="#ecd400"/><rect x="1" y="5" width="1" height="1" fill="#ecd400"/><rect x="6" y="5" width="1" height="1" fill="#ecd400"/><rect x="1" y="6" width="1" height="1" fill="#ecd400"/><rect x="3" y="6" width="1" height="1" fill="#ecd400"/><rect x="4" y="6" width="1" height="1" fill="#ecd400"/><rect x="6" y="6" width="1" height="1" fill="#ecd400"/><rect x="2" y="7" width="1" height="1" fill="#ecd400"/><rect x="5" y="7" width="1" height="1" fill="#ecd400"/></g></defs></svg>
<div class="a" style="left:439px;top:168px;width:469px;height:16px;background:#ff55ff;"></div>
<div class="a" style="left:439px;top:184px;width:15px;height:16px;background:#ff55ff;"></div>
<div class="a" style="left:454px;top:184px;width:454px;height:16px;background:#ff8cff;border-left:1px solid #e0bce2;"></div>
<div class="a" style="left:439px;top:200px;width:15px;height:16px;background:#ff55ff;"></div>
<div class="a" style="left:454px;top:200px;width:16px;height:16px;background:#ff8cff;border-left:1px solid #e0bce2"></div>
<div class="a" style="left:470px;top:200px;width:438px;height:16px;background:#ffb3ff;border-left:1px solid #e0c8e2;"></div>
<div class="a" style="left:439px;top:216px;width:15px;height:16px;background:#ff55ff;"></div>
<div class="a" style="left:454px;top:216px;width:16px;height:16px;background:#ff8cff;border-left:1px solid #e0bce2"></div>
<div class="a" style="left:470px;top:216px;width:16px;height:16px;background:#ffb3ff;border-left:1px solid #e0c8e2"></div>
<div class="a" style="left:439px;top:232px;width:15px;height:16px;background:#ff55ff;"></div>
<div class="a" style="left:454px;top:232px;width:16px;height:16px;background:#ff8cff;border-left:1px solid #e0bce2"></div>
<div class="a" style="left:470px;top:232px;width:16px;height:16px;background:#ffb3ff;border-left:1px solid #e0c8e2"></div>
<div class="a" style="left:439px;top:248px;width:15px;height:16px;background:#ff55ff;"></div>
<div class="a" style="left:454px;top:248px;width:16px;height:16px;background:#ff8cff;border-left:1px solid #e0bce2"></div>
<div class="a" style="left:470px;top:248px;width:438px;height:16px;background:#ffb3ff;border-left:1px solid #e0c8e2;"></div>
<div class="a" style="left:439px;top:264px;width:15px;height:16px;background:#ff55ff;"></div>
<div class="a" style="left:454px;top:264px;width:16px;height:16px;background:#ff8cff;border-left:1px solid #e0bce2"></div>
<div class="a" style="left:470px;top:264px;width:16px;height:16px;background:#ffb3ff;border-left:1px solid #e0c8e2"></div>
<div class="a" style="left:439px;top:280px;width:15px;height:16px;background:#ff55ff;"></div>
<div class="a" style="left:454px;top:280px;width:16px;height:16px;background:#ff8cff;border-left:1px solid #e0bce2"></div>
<div class="a" style="left:470px;top:280px;width:16px;height:16px;background:#ffb3ff;border-left:1px solid #e0c8e2"></div>
<div class="a" style="left:439px;top:296px;width:15px;height:16px;background:#ff55ff;"></div>
<div class="a" style="left:454px;top:296px;width:16px;height:16px;background:#ff8cff;border-left:1px solid #e0bce2"></div>
<div class="a" style="left:470px;top:296px;width:16px;height:16px;background:#ffb3ff;border-left:1px solid #e0c8e2"></div>
<div class="a" style="left:439px;top:312px;width:15px;height:16px;background:#ff55ff;"></div>
<div class="a" style="left:454px;top:312px;width:16px;height:16px;background:#ff8cff;border-left:1px solid #e0bce2"></div>
<div class="a" style="left:470px;top:312px;width:438px;height:16px;background:#ffb3ff;border-left:1px solid #e0c8e2;"></div>
<div class="a" style="left:439px;top:328px;width:15px;height:16px;background:#ff55ff;"></div>
<div class="a" style="left:454px;top:328px;width:16px;height:16px;background:#ff8cff;border-left:1px solid #e0bce2"></div>
<div class="a" style="left:470px;top:328px;width:16px;height:16px;background:#ffb3ff;border-left:1px solid #e0c8e2"></div>
<div class="a" style="left:486px;top:328px;width:422px;height:16px;background:#ffd2ff;border-left:1px solid #e0d2e4;"></div>
<div class="a" style="left:439px;top:344px;width:15px;height:16px;background:#ff55ff;"></div>
<div class="a" style="left:454px;top:344px;width:16px;height:16px;background:#ff8cff;border-left:1px solid #e0bce2"></div>
<div class="a" style="left:470px;top:344px;width:16px;height:16px;background:#ffb3ff;border-left:1px solid #e0c8e2"></div>
<div class="a" style="left:486px;top:344px;width:16px;height:16px;background:#ffd2ff;border-left:1px solid #e0d2e4"></div>
<div class="a" style="left:439px;top:360px;width:15px;height:16px;background:#ff55ff;"></div>
<div class="a" style="left:454px;top:360px;width:16px;height:16px;background:#ff8cff;border-left:1px solid #e0bce2"></div>
<div class="a" style="left:470px;top:360px;width:16px;height:16px;background:#ffb3ff;border-left:1px solid #e0c8e2"></div>
<div class="a" style="left:486px;top:360px;width:16px;height:16px;background:#ffd2ff;border-left:1px solid #e0d2e4"></div>
<div class="a" style="left:439px;top:376px;width:15px;height:16px;background:#ff55ff;"></div>
<div class="a" style="left:454px;top:376px;width:16px;height:16px;background:#ff8cff;border-left:1px solid #e0bce2"></div>
<div class="a" style="left:470px;top:376px;width:16px;height:16px;background:#ffb3ff;border-left:1px solid #e0c8e2"></div>
<div class="a" style="left:486px;top:376px;width:16px;height:16px;background:#ffd2ff;border-left:1px solid #e0d2e4"></div>
<div class="a" style="left:439px;top:392px;width:15px;height:16px;background:#ff55ff;"></div>
<div class="a" style="left:454px;top:392px;width:16px;height:16px;background:#ff8cff;border-left:1px solid #e0bce2"></div>
<div class="a" style="left:470px;top:392px;width:16px;height:16px;background:#ffb3ff;border-left:1px solid #e0c8e2"></div>
<div class="a" style="left:486px;top:392px;width:422px;height:16px;background:#ffd2ff;border-left:1px solid #e0d2e4;"></div>
<div class="a" style="left:439px;top:408px;width:15px;height:16px;background:#ff55ff;"></div>
<div class="a" style="left:454px;top:408px;width:16px;height:16px;background:#ff8cff;border-left:1px solid #e0bce2"></div>
<div class="a" style="left:470px;top:408px;width:16px;height:16px;background:#ffb3ff;border-left:1px solid #e0c8e2"></div>
<div class="a" style="left:486px;top:408px;width:16px;height:16px;background:#ffd2ff;border-left:1px solid #e0d2e4"></div>
<div class="a" style="left:439px;top:424px;width:15px;height:16px;background:#ff55ff;"></div>
<div class="a" style="left:454px;top:424px;width:16px;height:16px;background:#ff8cff;border-left:1px solid #e0bce2"></div>
<div class="a" style="left:470px;top:424px;width:16px;height:16px;background:#ffb3ff;border-left:1px solid #e0c8e2"></div>
<div class="a" style="left:486px;top:424px;width:16px;height:16px;background:#ffd2ff;border-left:1px solid #e0d2e4"></div>
<div class="a" style="left:439px;top:440px;width:15px;height:16px;background:#ff55ff;"></div>
<div class="a" style="left:454px;top:440px;width:16px;height:16px;background:#ff8cff;border-left:1px solid #e0bce2"></div>
<div class="a" style="left:470px;top:440px;width:16px;height:16px;background:#ffb3ff;border-left:1px solid #e0c8e2"></div>
<div class="a" style="left:486px;top:440px;width:16px;height:16px;background:#ffd2ff;border-left:1px solid #e0d2e4"></div>
<div class="a" style="left:439px;top:456px;width:15px;height:16px;background:#ff55ff;"></div>
<div class="a" style="left:454px;top:456px;width:454px;height:16px;background:#ff8cff;border-left:1px solid #e0bce2;"></div>
<div class="a" style="left:439px;top:472px;width:15px;height:16px;background:#ff55ff;"></div>
<div class="a" style="left:454px;top:472px;width:16px;height:16px;background:#ff8cff;border-left:1px solid #e0bce2"></div>
<div class="a" style="left:470px;top:472px;width:438px;height:16px;background:#ffb3ff;border-left:1px solid #e0c8e2;"></div>
<div class="a" style="left:439px;top:488px;width:15px;height:16px;background:#ff55ff;"></div>
<div class="a" style="left:454px;top:488px;width:16px;height:16px;background:#ff8cff;border-left:1px solid #e0bce2"></div>
<div class="a" style="left:470px;top:488px;width:16px;height:16px;background:#ffb3ff;border-left:1px solid #e0c8e2"></div>
<div class="a" style="left:486px;top:488px;width:422px;height:16px;background:#ffd2ff;border-left:1px solid #e0d2e4;"></div>
<div class="a" style="left:439px;top:504px;width:15px;height:16px;background:#ff55ff;"></div>
<div class="a" style="left:454px;top:504px;width:16px;height:16px;background:#ff8cff;border-left:1px solid #e0bce2"></div>
<div class="a" style="left:470px;top:504px;width:16px;height:16px;background:#ffb3ff;border-left:1px solid #e0c8e2"></div>
<div class="a" style="left:486px;top:504px;width:16px;height:16px;background:#ffd2ff;border-left:1px solid #e0d2e4"></div>
<div class="a" style="left:439px;top:520px;width:15px;height:16px;background:#ff55ff;"></div>
<div class="a" style="left:454px;top:520px;width:16px;height:16px;background:#ff8cff;border-left:1px solid #e0bce2"></div>
<div class="a" style="left:470px;top:520px;width:16px;height:16px;background:#ffb3ff;border-left:1px solid #e0c8e2"></div>
<div class="a" style="left:486px;top:520px;width:16px;height:16px;background:#ffd2ff;border-left:1px solid #e0d2e4"></div>
<div class="a" style="left:439px;top:536px;width:15px;height:16px;background:#ff55ff;"></div>
<div class="a" style="left:454px;top:536px;width:16px;height:16px;background:#ff8cff;border-left:1px solid #e0bce2"></div>
<div class="a" style="left:470px;top:536px;width:16px;height:16px;background:#ffb3ff;border-left:1px solid #e0c8e2"></div>
<div class="a" style="left:486px;top:536px;width:422px;height:16px;background:#ffd2ff;border-left:1px solid #e0d2e4;"></div>
<div class="a" style="left:439px;top:552px;width:15px;height:16px;background:#ff55ff;"></div>
<div class="a" style="left:454px;top:552px;width:16px;height:16px;background:#ff8cff;border-left:1px solid #e0bce2"></div>
<div class="a" style="left:470px;top:552px;width:16px;height:16px;background:#ffb3ff;border-left:1px solid #e0c8e2"></div>
<div class="a" style="left:486px;top:552px;width:16px;height:16px;background:#ffd2ff;border-left:1px solid #e0d2e4"></div>
<div class="a" style="left:439px;top:568px;width:15px;height:16px;background:#ff55ff;"></div>
<div class="a" style="left:454px;top:568px;width:16px;height:16px;background:#ff8cff;border-left:1px solid #e0bce2"></div>
<div class="a" style="left:470px;top:568px;width:16px;height:16px;background:#ffb3ff;border-left:1px solid #e0c8e2"></div>
<div class="a" style="left:486px;top:568px;width:16px;height:16px;background:#ffd2ff;border-left:1px solid #e0d2e4"></div>
<div class="a" style="left:439px;top:584px;width:15px;height:16px;background:#ff55ff;"></div>
<div class="a" style="left:454px;top:584px;width:454px;height:16px;background:#ff8cff;border-left:1px solid #e0bce2;"></div>
<div class="a" style="left:439px;top:600px;width:15px;height:16px;background:#ff55ff;"></div>
<div class="a" style="left:454px;top:600px;width:16px;height:16px;background:#ff8cff;border-left:1px solid #e0bce2"></div>
<div class="a" style="left:470px;top:600px;width:438px;height:16px;background:#ffb3ff;border-left:1px solid #e0c8e2;"></div>
<div class="a" style="left:439px;top:616px;width:15px;height:16px;background:#ff55ff;"></div>
<div class="a" style="left:454px;top:616px;width:16px;height:16px;background:#ff8cff;border-left:1px solid #e0bce2"></div>
<div class="a" style="left:470px;top:616px;width:16px;height:16px;background:#ffb3ff;border-left:1px solid #e0c8e2"></div>
<div class="a" style="left:439px;top:632px;width:15px;height:16px;background:#ff55ff;"></div>
<div class="a" style="left:454px;top:632px;width:16px;height:16px;background:#ff8cff;border-left:1px solid #e0bce2"></div>
<div class="a" style="left:470px;top:632px;width:16px;height:16px;background:#ffb3ff;border-left:1px solid #e0c8e2"></div>
<div class="a" style="left:439px;top:648px;width:15px;height:16px;background:#ff55ff;"></div>
<div class="a" style="left:454px;top:648px;width:454px;height:16px;background:#ff8cff;border-left:1px solid #e0bce2;"></div>
<div class="a" style="left:439px;top:664px;width:15px;height:16px;background:#ff55ff;"></div>
<div class="a" style="left:454px;top:664px;width:16px;height:16px;background:#ff8cff;border-left:1px solid #e0bce2"></div>
<div class="a" style="left:470px;top:664px;width:438px;height:16px;background:#ffb3ff;border-left:1px solid #e0c8e2;"></div>
<div class="a" style="left:439px;top:680px;width:15px;height:16px;background:#ff55ff;"></div>
<div class="a" style="left:454px;top:680px;width:16px;height:16px;background:#ff8cff;border-left:1px solid #e0bce2"></div>
<div class="a" style="left:470px;top:680px;width:16px;height:16px;background:#ffb3ff;border-left:1px solid #e0c8e2"></div>
<div class="a" style="left:486px;top:680px;width:422px;height:16px;background:#ffd2ff;border-left:1px solid #e0d2e4;"></div>
<div class="a" style="left:439px;top:696px;width:15px;height:16px;background:#ff55ff;"></div>
<div class="a" style="left:454px;top:696px;width:16px;height:16px;background:#ff8cff;border-left:1px solid #e0bce2"></div>
<div class="a" style="left:470px;top:696px;width:16px;height:16px;background:#ffb3ff;border-left:1px solid #e0c8e2"></div>
<div class="a" style="left:486px;top:696px;width:16px;height:16px;background:#ffd2ff;border-left:1px solid #e0d2e4"></div>
<div class="a" style="left:439px;top:712px;width:15px;height:16px;background:#ff55ff;"></div>
<div class="a" style="left:454px;top:712px;width:16px;height:16px;background:#ff8cff;border-left:1px solid #e0bce2"></div>
<div class="a" style="left:470px;top:712px;width:16px;height:16px;background:#ffb3ff;border-left:1px solid #e0c8e2"></div>
<div class="a" style="left:486px;top:712px;width:16px;height:16px;background:#ffd2ff;border-left:1px solid #e0d2e4"></div>
<div class="a" style="left:439px;top:728px;width:15px;height:16px;background:#ff55ff;"></div>
<div class="a" style="left:454px;top:728px;width:16px;height:16px;background:#ff8cff;border-left:1px solid #e0bce2"></div>
<div class="a" style="left:470px;top:728px;width:16px;height:16px;background:#ffb3ff;border-left:1px solid #e0c8e2"></div>
<div class="a" style="left:486px;top:728px;width:16px;height:16px;background:#ffd2ff;border-left:1px solid #e0d2e4"></div>
<div class="a" style="left:454px;top:183px;width:454px;height:1px;background:#e0bce2"></div>
<div class="a" style="left:470px;top:199px;width:438px;height:1px;background:#e0c8e2"></div>
<div class="a" style="left:470px;top:247px;width:438px;height:1px;background:#e0c8e2"></div>
<div class="a" style="left:470px;top:311px;width:438px;height:1px;background:#e0c8e2"></div>
<div class="a" style="left:486px;top:327px;width:422px;height:1px;background:#e0d2e4"></div>
<div class="a" style="left:486px;top:391px;width:422px;height:1px;background:#e0d2e4"></div>
<div class="a" style="left:454px;top:455px;width:454px;height:1px;background:#e0bce2"></div>
<div class="a" style="left:470px;top:471px;width:438px;height:1px;background:#e0c8e2"></div>
<div class="a" style="left:486px;top:487px;width:422px;height:1px;background:#e0d2e4"></div>
<div class="a" style="left:486px;top:535px;width:422px;height:1px;background:#e0d2e4"></div>
<div class="a" style="left:454px;top:583px;width:454px;height:1px;background:#e0bce2"></div>
<div class="a" style="left:470px;top:599px;width:438px;height:1px;background:#e0c8e2"></div>
<div class="a" style="left:454px;top:647px;width:454px;height:1px;background:#e0bce2"></div>
<div class="a" style="left:470px;top:663px;width:438px;height:1px;background:#e0c8e2"></div>
<div class="a" style="left:486px;top:679px;width:422px;height:1px;background:#e0d2e4"></div>
<div class="t" style="left:458px;top:170px;">Optimisation</div>
<div class="t" style="left:473px;top:186px;letter-spacing:-0.1px">Training</div>
<div class="t" style="left:489px;top:202px;letter-spacing:-0.22px">MaxDumpedInSequence1</div>
<div class="c" style="left:486px;top:216px;width:58px;background:#f7f7f9;border-left:1px solid #d2d3db;text-align:left"></div>
<div class="t" style="left:504px;top:218px;">Maxi...</div>
<div class="c" style="left:544px;top:216px;width:72px"><svg style="position:absolute;right:3px;top:5px" width="10" height="6" viewBox="0 0 10 6"><path d="M5 3 C4 1 .9 .5 .9 3 C.9 5.500 4 5 5 3 C6 1 9.100 .5 9.100 3 C9.100 5.500 6 5 5 3 Z" fill="none" stroke="#20202c" stroke-width="1.250"/></svg></div>
<div class="c" style="left:616px;top:216px;width:72px"><svg style="position:absolute;right:3px;top:5px" width="10" height="6" viewBox="0 0 10 6"><path d="M5 3 C4 1 .9 .5 .9 3 C.9 5.500 4 5 5 3 C6 1 9.100 .5 9.100 3 C9.100 5.500 6 5 5 3 Z" fill="none" stroke="#20202c" stroke-width="1.250"/></svg></div>
<div class="c" style="left:688px;top:216px;width:72px"><svg style="position:absolute;right:3px;top:5px" width="10" height="6" viewBox="0 0 10 6"><path d="M5 3 C4 1 .9 .5 .9 3 C.9 5.500 4 5 5 3 C6 1 9.100 .5 9.100 3 C9.100 5.500 6 5 5 3 Z" fill="none" stroke="#20202c" stroke-width="1.250"/></svg></div>
<div class="c" style="left:760px;top:216px;width:72px"><svg style="position:absolute;right:3px;top:5px" width="10" height="6" viewBox="0 0 10 6"><path d="M5 3 C4 1 .9 .5 .9 3 C.9 5.500 4 5 5 3 C6 1 9.100 .5 9.100 3 C9.100 5.500 6 5 5 3 Z" fill="none" stroke="#20202c" stroke-width="1.250"/></svg></div>
<div class="c" style="left:832px;top:216px;width:72px"><svg style="position:absolute;right:3px;top:5px" width="10" height="6" viewBox="0 0 10 6"><path d="M5 3 C4 1 .9 .5 .9 3 C.9 5.500 4 5 5 3 C6 1 9.100 .5 9.100 3 C9.100 5.500 6 5 5 3 Z" fill="none" stroke="#20202c" stroke-width="1.250"/></svg></div>
<div class="c" style="left:904px;top:216px;width:10px"></div>
<div class="c" style="left:486px;top:232px;width:58px;background:#f7f7f9;border-left:1px solid #d2d3db;text-align:left"></div>
<svg class="a" style="left:505px;top:235px" width="8" height="8" viewBox="0 0 8 8"><use href="#st"/></svg>
<div class="t" style="left:516px;top:234px;letter-spacing:-0.1px">Act...</div>
<div class="c hc" style="left:544px;top:232px;width:72px"></div>
<div class="c hc" style="left:616px;top:232px;width:72px"></div>
<div class="c hc" style="left:688px;top:232px;width:72px"></div>
<div class="c hc" style="left:760px;top:232px;width:72px"></div>
<div class="c hc" style="left:832px;top:232px;width:72px"></div>
<div class="c hc" style="left:904px;top:232px;width:10px"></div>
<div class="t" style="left:489px;top:250px;letter-spacing:-0.15px">MaxRateToSequence1</div>
<div class="c" style="left:486px;top:264px;width:58px;background:#f7f7f9;border-left:1px solid #d2d3db;text-align:left"></div>
<div class="t" style="left:504px;top:266px;">Maxi...</div>
<div class="c" style="left:544px;top:264px;width:72px">1,000</div>
<div class="c" style="left:616px;top:264px;width:72px">1,000</div>
<div class="c" style="left:688px;top:264px;width:72px">1,000</div>
<div class="c" style="left:760px;top:264px;width:72px">1,000</div>
<div class="c" style="left:832px;top:264px;width:72px">1,000</div>
<div class="c" style="left:904px;top:264px;width:10px"></div>
<div class="c" style="left:486px;top:280px;width:58px;background:#f7f7f9;border-left:1px solid #d2d3db;text-align:left"></div>
<svg class="a" style="left:505px;top:283px" width="8" height="8" viewBox="0 0 8 8"><use href="#st"/></svg>
<div class="t" style="left:516px;top:282px;letter-spacing:-0.1px">Act...</div>
<div class="c hc" style="left:544px;top:280px;width:72px"></div>
<div class="c hc" style="left:616px;top:280px;width:72px"></div>
<div class="c hc" style="left:688px;top:280px;width:72px"></div>
<div class="c hc" style="left:760px;top:280px;width:72px"></div>
<div class="c hc" style="left:832px;top:280px;width:72px"></div>
<div class="c hc" style="left:904px;top:280px;width:10px"></div>
<div class="c" style="left:486px;top:296px;width:58px;background:#f7f7f9;border-left:1px solid #d2d3db;text-align:left"></div>
<svg class="a" style="left:505px;top:299px" width="8" height="8" viewBox="0 0 8 8"><use href="#st"/></svg>
<div class="t" style="left:516px;top:298px;letter-spacing:-0.1px">Act...</div>
<div class="c hc" style="left:544px;top:296px;width:72px"></div>
<div class="c hc" style="left:616px;top:296px;width:72px"></div>
<div class="c hc" style="left:688px;top:296px;width:72px"></div>
<div class="c hc" style="left:760px;top:296px;width:72px"></div>
<div class="c hc" style="left:832px;top:296px;width:72px"></div>
<div class="c hc" style="left:904px;top:296px;width:10px"></div>
<div class="t" style="left:489px;top:314px;letter-spacing:-0.12px">PreferPrimaryCrusher</div>
<div class="t" style="left:505px;top:330px;letter-spacing:-0.1px">Crusher/Crusher_DryPlant</div>
<div class="c" style="left:502px;top:344px;width:42px;background:#f7f7f9;border-left:1px solid #d2d3db;text-align:left"></div>
<div class="t" style="left:520px;top:346px;">C...</div>
<div class="c" style="left:544px;top:344px;width:72px">10</div>
<div class="c" style="left:616px;top:344px;width:72px">10</div>
<div class="c" style="left:688px;top:344px;width:72px">10</div>
<div class="c" style="left:760px;top:344px;width:72px">10</div>
<div class="c" style="left:832px;top:344px;width:72px">10</div>
<div class="c" style="left:904px;top:344px;width:10px"></div>
<div class="c" style="left:502px;top:360px;width:42px;background:#f7f7f9;border-left:1px solid #d2d3db;text-align:left"></div>
<svg class="a" style="left:521px;top:363px" width="8" height="8" viewBox="0 0 8 8"><use href="#st"/></svg>
<div class="t" style="left:532px;top:362px;">...</div>
<div class="c hc" style="left:544px;top:360px;width:72px"></div>
<div class="c hc" style="left:616px;top:360px;width:72px"></div>
<div class="c hc" style="left:688px;top:360px;width:72px"></div>
<div class="c hc" style="left:760px;top:360px;width:72px"></div>
<div class="c hc" style="left:832px;top:360px;width:72px"></div>
<div class="c hc" style="left:904px;top:360px;width:10px"></div>
<div class="c" style="left:502px;top:376px;width:42px;background:#f7f7f9;border-left:1px solid #d2d3db;text-align:left"></div>
<svg class="a" style="left:521px;top:379px" width="8" height="8" viewBox="0 0 8 8"><use href="#st"/></svg>
<div class="t" style="left:532px;top:378px;">...</div>
<div class="c hc" style="left:544px;top:376px;width:72px"></div>
<div class="c hc" style="left:616px;top:376px;width:72px"></div>
<div class="c hc" style="left:688px;top:376px;width:72px"></div>
<div class="c hc" style="left:760px;top:376px;width:72px"></div>
<div class="c hc" style="left:832px;top:376px;width:72px"></div>
<div class="c hc" style="left:904px;top:376px;width:10px"></div>
<div class="t" style="left:505px;top:394px;letter-spacing:-0.1px">Crusher/Crusher_WetPlant</div>
<div class="c" style="left:502px;top:408px;width:42px;background:#f7f7f9;border-left:1px solid #d2d3db;text-align:left"></div>
<div class="t" style="left:520px;top:410px;">C...</div>
<div class="c" style="left:544px;top:408px;width:72px">10</div>
<div class="c" style="left:616px;top:408px;width:72px">10</div>
<div class="c" style="left:688px;top:408px;width:72px">10</div>
<div class="c" style="left:760px;top:408px;width:72px">10</div>
<div class="c" style="left:832px;top:408px;width:72px">10</div>
<div class="c" style="left:904px;top:408px;width:10px"></div>
<div class="c" style="left:502px;top:424px;width:42px;background:#f7f7f9;border-left:1px solid #d2d3db;text-align:left"></div>
<svg class="a" style="left:521px;top:427px" width="8" height="8" viewBox="0 0 8 8"><use href="#st"/></svg>
<div class="t" style="left:532px;top:426px;">...</div>
<div class="c hc" style="left:544px;top:424px;width:72px"></div>
<div class="c hc" style="left:616px;top:424px;width:72px"></div>
<div class="c hc" style="left:688px;top:424px;width:72px"></div>
<div class="c hc" style="left:760px;top:424px;width:72px"></div>
<div class="c hc" style="left:832px;top:424px;width:72px"></div>
<div class="c hc" style="left:904px;top:424px;width:10px"></div>
<div class="c" style="left:502px;top:440px;width:42px;background:#f7f7f9;border-left:1px solid #d2d3db;text-align:left"></div>
<svg class="a" style="left:521px;top:443px" width="8" height="8" viewBox="0 0 8 8"><use href="#st"/></svg>
<div class="t" style="left:532px;top:442px;">...</div>
<div class="c hc" style="left:544px;top:440px;width:72px"></div>
<div class="c hc" style="left:616px;top:440px;width:72px"></div>
<div class="c hc" style="left:688px;top:440px;width:72px"></div>
<div class="c hc" style="left:760px;top:440px;width:72px"></div>
<div class="c hc" style="left:832px;top:440px;width:72px"></div>
<div class="c hc" style="left:904px;top:440px;width:10px"></div>
<div class="t" style="left:473px;top:458px;letter-spacing:-0.05px">CrusherFeedQuantity</div>
<div class="t" style="left:489px;top:474px;letter-spacing:-0.05px">CrusherFeedQuantity</div>
<div class="t" style="left:505px;top:490px;letter-spacing:-0.1px">Crusher/Crusher_DryPlant</div>
<div class="c" style="left:502px;top:504px;width:42px;background:#f7f7f9;border-left:1px solid #d2d3db;text-align:left"></div>
<div class="t" style="left:520px;top:506px;">M...</div>
<div class="c" style="left:544px;top:504px;width:72px">15,000</div>
<div class="c" style="left:616px;top:504px;width:72px">15,000</div>
<div class="c" style="left:688px;top:504px;width:72px">15,000</div>
<div class="c" style="left:760px;top:504px;width:72px">15,000</div>
<div class="c" style="left:832px;top:504px;width:72px">15,000</div>
<div class="c" style="left:904px;top:504px;width:10px"></div>
<div class="c" style="left:502px;top:520px;width:42px;background:#f7f7f9;border-left:1px solid #d2d3db;text-align:left"></div>
<svg class="a" style="left:521px;top:523px" width="8" height="8" viewBox="0 0 8 8"><use href="#st"/></svg>
<div class="t" style="left:532px;top:522px;">...</div>
<div class="c hc" style="left:544px;top:520px;width:72px"></div>
<div class="c hc" style="left:616px;top:520px;width:72px"></div>
<div class="c hc" style="left:688px;top:520px;width:72px"></div>
<div class="c hc" style="left:760px;top:520px;width:72px"></div>
<div class="c hc" style="left:832px;top:520px;width:72px"></div>
<div class="c hc" style="left:904px;top:520px;width:10px"></div>
<div class="t" style="left:505px;top:538px;letter-spacing:-0.1px">Crusher/Crusher_WetPlant</div>
<div class="c" style="left:502px;top:552px;width:42px;background:#f7f7f9;border-left:1px solid #d2d3db;text-align:left"></div>
<div class="t" style="left:520px;top:554px;">M...</div>
<div class="c" style="left:544px;top:552px;width:72px">17,000</div>
<div class="c" style="left:616px;top:552px;width:72px">17,000</div>
<div class="c" style="left:688px;top:552px;width:72px">17,000</div>
<div class="c" style="left:760px;top:552px;width:72px">17,000</div>
<div class="c" style="left:832px;top:552px;width:72px">17,000</div>
<div class="c" style="left:904px;top:552px;width:10px"></div>
<div class="c" style="left:502px;top:568px;width:42px;background:#f7f7f9;border-left:1px solid #d2d3db;text-align:left"></div>
<svg class="a" style="left:521px;top:571px" width="8" height="8" viewBox="0 0 8 8"><use href="#st"/></svg>
<div class="t" style="left:532px;top:570px;">...</div>
<div class="c hc" style="left:544px;top:568px;width:72px"></div>
<div class="c hc" style="left:616px;top:568px;width:72px"></div>
<div class="c hc" style="left:688px;top:568px;width:72px"></div>
<div class="c hc" style="left:760px;top:568px;width:72px"></div>
<div class="c hc" style="left:832px;top:568px;width:72px"></div>
<div class="c hc" style="left:904px;top:568px;width:10px"></div>
<div class="t" style="left:473px;top:586px;letter-spacing:-0.05px">ROMFeedQuantity</div>
<div class="t" style="left:489px;top:602px;letter-spacing:-0.2px">MaxStockpileFeed</div>
<div class="c" style="left:486px;top:616px;width:58px;background:#f7f7f9;border-left:1px solid #d2d3db;text-align:left"></div>
<div class="t" style="left:504px;top:618px;">Maxi...</div>
<div class="c" style="left:544px;top:616px;width:72px"><svg style="position:absolute;right:3px;top:5px" width="10" height="6" viewBox="0 0 10 6"><path d="M5 3 C4 1 .9 .5 .9 3 C.9 5.500 4 5 5 3 C6 1 9.100 .5 9.100 3 C9.100 5.500 6 5 5 3 Z" fill="none" stroke="#20202c" stroke-width="1.250"/></svg></div>
<div class="c" style="left:616px;top:616px;width:72px"><svg style="position:absolute;right:3px;top:5px" width="10" height="6" viewBox="0 0 10 6"><path d="M5 3 C4 1 .9 .5 .9 3 C.9 5.500 4 5 5 3 C6 1 9.100 .5 9.100 3 C9.100 5.500 6 5 5 3 Z" fill="none" stroke="#20202c" stroke-width="1.250"/></svg></div>
<div class="c" style="left:688px;top:616px;width:72px"><svg style="position:absolute;right:3px;top:5px" width="10" height="6" viewBox="0 0 10 6"><path d="M5 3 C4 1 .9 .5 .9 3 C.9 5.500 4 5 5 3 C6 1 9.100 .5 9.100 3 C9.100 5.500 6 5 5 3 Z" fill="none" stroke="#20202c" stroke-width="1.250"/></svg></div>
<div class="c" style="left:760px;top:616px;width:72px"><svg style="position:absolute;right:3px;top:5px" width="10" height="6" viewBox="0 0 10 6"><path d="M5 3 C4 1 .9 .5 .9 3 C.9 5.500 4 5 5 3 C6 1 9.100 .5 9.100 3 C9.100 5.500 6 5 5 3 Z" fill="none" stroke="#20202c" stroke-width="1.250"/></svg></div>
<div class="c" style="left:832px;top:616px;width:72px"><svg style="position:absolute;right:3px;top:5px" width="10" height="6" viewBox="0 0 10 6"><path d="M5 3 C4 1 .9 .5 .9 3 C.9 5.500 4 5 5 3 C6 1 9.100 .5 9.100 3 C9.100 5.500 6 5 5 3 Z" fill="none" stroke="#20202c" stroke-width="1.250"/></svg></div>
<div class="c" style="left:904px;top:616px;width:10px"></div>
<div class="c" style="left:486px;top:632px;width:58px;background:#f7f7f9;border-left:1px solid #d2d3db;text-align:left"></div>
<svg class="a" style="left:505px;top:635px" width="8" height="8" viewBox="0 0 8 8"><use href="#st"/></svg>
<div class="t" style="left:516px;top:634px;letter-spacing:-0.1px">Act...</div>
<div class="c hc" style="left:544px;top:632px;width:72px"></div>
<div class="c hc" style="left:616px;top:632px;width:72px"></div>
<div class="c hc" style="left:688px;top:632px;width:72px"></div>
<div class="c hc" style="left:760px;top:632px;width:72px"></div>
<div class="c hc" style="left:832px;top:632px;width:72px"></div>
<div class="c hc" style="left:904px;top:632px;width:10px"></div>
<div class="t" style="left:473px;top:650px;letter-spacing:-0.1px">ROMGradeTargets</div>
<div class="t" style="left:489px;top:666px;letter-spacing:-0.25px">HGLC Stockpiles - Inst</div>
<div class="t" style="left:505px;top:682px;">grades_Fe</div>
<div class="c" style="left:502px;top:696px;width:42px;background:#f7f7f9;border-left:1px solid #d2d3db;text-align:left"></div>
<div class="t" style="left:520px;top:698px;">Mi...</div>
<div class="c" style="left:544px;top:696px;width:72px">56</div>
<div class="c" style="left:616px;top:696px;width:72px">56</div>
<div class="c" style="left:688px;top:696px;width:72px">56</div>
<div class="c" style="left:760px;top:696px;width:72px">56</div>
<div class="c" style="left:832px;top:696px;width:72px">56</div>
<div class="c" style="left:904px;top:696px;width:10px"></div>
<div class="c" style="left:502px;top:712px;width:42px;background:#f7f7f9;border-left:1px solid #d2d3db;text-align:left"></div>
<div class="t" style="left:520px;top:714px;">M...</div>
<div class="c" style="left:544px;top:712px;width:72px">100</div>
<div class="c" style="left:616px;top:712px;width:72px">100</div>
<div class="c" style="left:688px;top:712px;width:72px">100</div>
<div class="c" style="left:760px;top:712px;width:72px">100</div>
<div class="c" style="left:832px;top:712px;width:72px">100</div>
<div class="c" style="left:904px;top:712px;width:10px"></div>
<div class="c" style="left:502px;top:728px;width:42px;background:#f7f7f9;border-left:1px solid #d2d3db;text-align:left"></div>
<svg class="a" style="left:521px;top:731px" width="8" height="8" viewBox="0 0 8 8"><use href="#st"/></svg>
<div class="t" style="left:532px;top:730px;">...</div>
<div class="c hc" style="left:544px;top:728px;width:72px"></div>
<div class="c hc" style="left:616px;top:728px;width:72px"></div>
<div class="c hc" style="left:688px;top:728px;width:72px"></div>
<div class="c hc" style="left:760px;top:728px;width:72px"></div>
<div class="c hc" style="left:832px;top:728px;width:72px"></div>
<div class="c hc" style="left:904px;top:728px;width:10px"></div>
</body></html>
